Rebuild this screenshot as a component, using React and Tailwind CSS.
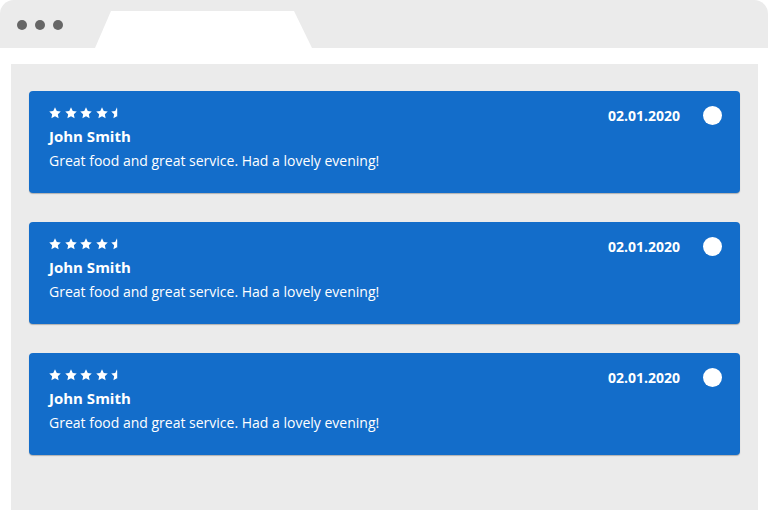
const reviews = [
  { id: 1, name: "John Smith", date: "02.01.2020", text: "Great food and great service. Had a lovely evening!" },
  { id: 2, name: "John Smith", date: "02.01.2020", text: "Great food and great service. Had a lovely evening!" },
  { id: 3, name: "John Smith", date: "02.01.2020", text: "Great food and great service. Had a lovely evening!" },
];

const STAR = "M6 0.3l1.75 3.65 4 0.5-2.9 2.75 0.75 3.95L6 9.2l-3.6 1.95 0.75-3.95L0.25 4.45l4-0.5z";

function Stars() {
  return (
    <div className="flex items-center gap-[3.5px] h-[12px]">
      {[0, 1, 2, 3].map((i) => (
        <svg key={i} width="12" height="12" viewBox="0 0 12 12">
          <path d={STAR} fill="white" />
        </svg>
      ))}
      {/* half star */}
      <svg width="12" height="12" viewBox="0 0 12 12">
        <clipPath id="half">
          <rect x="0" y="0" width="6.2" height="12" />
        </clipPath>
        <path d={STAR} fill="white" clipPath="url(#half)" />
      </svg>
    </div>
  );
}

function ReviewCard({ review }) {
  return (
    <div className="flex items-start justify-between rounded-[4px] bg-[#136dca] pl-[20px] pr-[18px] pt-[16px] h-[102px] shadow-[0_1px_1px_rgba(0,0,0,0.25)]">
      <div className="flex flex-col">
        <Stars />
        <h3 className="mt-[7px] text-[15px] font-bold leading-[20px] text-white">{review.name}</h3>
        <p className="mt-[6px] text-[14px] leading-[18px] text-white">{review.text}</p>
      </div>
      <div className="mt-[-1px] flex items-center gap-[23px]">
        <span className="text-[14px] font-bold leading-[16px] text-white">{review.date}</span>
        <span className="h-[19px] w-[19px] rounded-full bg-white" />
      </div>
    </div>
  );
}

export default function App() {
  return (
    <div className="h-[523px] w-[768px] overflow-hidden bg-white font-['Open_Sans',sans-serif]">
      {/* BROWSER BAR */}
      <div className="relative h-[48px] rounded-t-[14px] bg-[#ebebeb]">
        <div className="absolute left-[17px] top-[20px] flex gap-[8px]">
          <span className="h-[10px] w-[10px] rounded-full bg-[#666666]" />
          <span className="h-[10px] w-[10px] rounded-full bg-[#666666]" />
          <span className="h-[10px] w-[10px] rounded-full bg-[#666666]" />
        </div>
        <svg className="absolute left-[95px] top-[11px]" width="217" height="37" viewBox="0 0 217 37">
          <path d="M16 0H199L217 37H0Z" fill="white" />
        </svg>
      </div>

      {/* PAGE */}
      <div className="ml-[11px] mt-[16px] h-[446px] w-[747px] bg-[#ebebeb] px-[18px] pt-[27px]">
        <div className="flex flex-col gap-[29px]">
          {reviews.map((r) => (
            <ReviewCard key={r.id} review={r} />
          ))}
        </div>
      </div>
    </div>
  );
}
